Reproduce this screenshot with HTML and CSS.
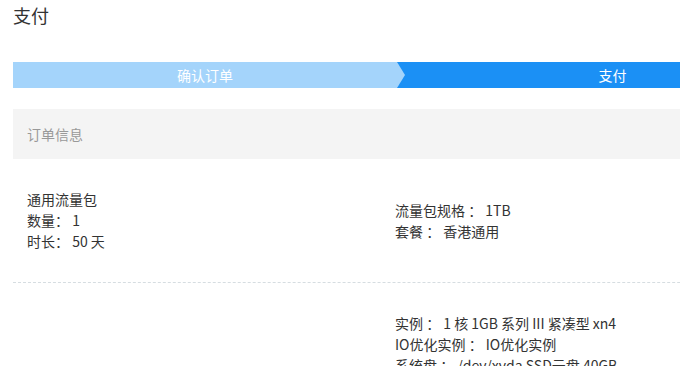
FILE: index.html
```html
<!DOCTYPE html>
<html lang="zh-CN">
<head>
  <meta charset="UTF-8" />
  <title>支付</title>
  <link rel="stylesheet" href="styles.css">
</head>
<body>
  <div class="page">
    <h1 class="page-title">支付</h1>

    <div class="steps">
      <div class="step step-done">确认订单</div>
      <div class="step step-active">支付</div>
    </div>

    <div class="panel-head">订单信息</div>

    <div class="order-row">
      <div class="order-col">
        <p>通用流量包</p>
        <p>数量： 1</p>
        <p>时长： 50 天</p>
      </div>
      <div class="order-col">
        <p>流量包规格 ： 1TB</p>
        <p>套餐 ： 香港通用</p>
      </div>
    </div>

    <div class="order-row">
      <div class="order-col"></div>
      <div class="order-col">
        <p>实例 ： 1 核 1GB 系列 III 紧凑型 xn4</p>
        <p>IO优化实例 ： IO优化实例</p>
        <p>系统盘 ： /dev/xvda SSD云盘 40GB</p>
      </div>
    </div>
  </div>
</body>
</html>
```

FILE: styles.css
```css
body {
  margin: 0;
  font-family: "Noto Sans CJK SC", "Noto Sans", sans-serif;
  font-size: 14px;
  color: #333;
  overflow: hidden;
}

.page {
  width: 807px;
  padding: 0 13px;
}

.page-title {
  margin: 0;
  padding-top: 2px;
  font-size: 18px;
  font-weight: normal;
  line-height: 26px;
  color: #333;
}

.steps {
  display: flex;
  margin-top: 34px;
  height: 26px;
}

.step {
  display: flex;
  align-items: center;
  justify-content: center;
  color: #fff;
  font-size: 14px;
  line-height: 26px;
}

.step-done {
  position: relative;
  z-index: 1;
  width: 384px;
  background: #a4d4fb;
}

.step-done::after {
  content: "";
  position: absolute;
  top: 0;
  right: -8px;
  border-top: 13px solid transparent;
  border-bottom: 13px solid transparent;
  border-left: 8px solid #a4d4fb;
}

.step-active {
  flex: 1;
  padding-left: 8px;
  background: #1b90f5;
}

.panel-head {
  margin-top: 21px;
  height: 50px;
  line-height: 50px;
  padding: 0 14px;
  background: #f4f4f4;
  color: #999;
}

.order-row {
  display: flex;
  align-items: center;
  padding: 30px 0;
  border-bottom: 1px dashed #d6dde1;
}

.order-col {
  box-sizing: border-box;
  width: 368px;
  padding-left: 14px;
}

.order-col p {
  margin: 0;
  line-height: 21px;
}
```
